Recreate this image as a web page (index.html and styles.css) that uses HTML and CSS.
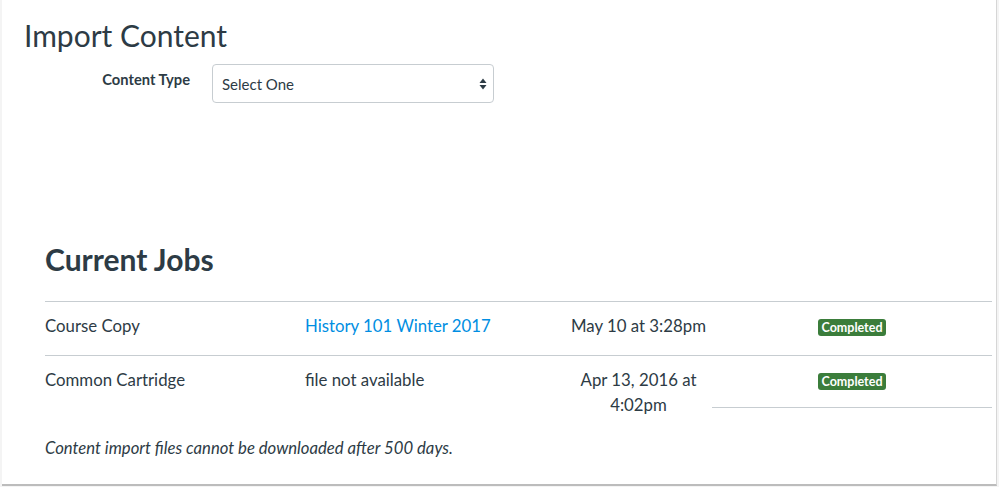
FILE: index.html
```html
<!DOCTYPE html>
<html lang="en">
<head>
    <meta charset="UTF-8" />
    <title>Import Content</title>
    <link rel="stylesheet" href="styles.css">
</head>
<body>
    <div class="frame">
        <h1 class="page-title">Import Content</h1>

        <div class="form-row">
            <label class="form-label" for="content-type">Content Type</label>
            <div class="select-box" id="content-type">
                <span>Select One</span>
                <svg class="select-arrows" width="8" height="12" viewBox="0 0 8 12">
                    <path d="M4 0.5 L7.5 5 L0.5 5 Z" fill="#2d3b45"/>
                    <path d="M4 11.5 L7.5 7 L0.5 7 Z" fill="#2d3b45"/>
                </svg>
            </div>
        </div>

        <div class="jobs">
            <h2 class="jobs-title">Current Jobs</h2>

            <table class="jobs-table">
                <colgroup>
                    <col class="col-type">
                    <col class="col-source">
                    <col class="col-date">
                    <col class="col-status">
                </colgroup>
                <tr>
                    <td>Course Copy</td>
                    <td><a href="#">History 101 Winter 2017</a></td>
                    <td class="date">May 10 at 3:28pm</td>
                    <td class="status"><span class="badge">Completed</span></td>
                </tr>
                <tr>
                    <td>Common Cartridge</td>
                    <td>file not available</td>
                    <td class="date">Apr 13, 2016 at 4:02pm</td>
                    <td class="status last"><div class="status-wrap"><span class="badge">Completed</span></div></td>
                </tr>
            </table>

            <p class="note">Content import files cannot be downloaded after 500 days.</p>
        </div>
    </div>
</body>
</html>
```

FILE: styles.css
```css
* {
    margin: 0;
    padding: 0;
    box-sizing: border-box;
}

body {
    font-family: Lato, 'Open Sans', sans-serif;
    color: #2d3b45;
    background-color: #f4f4f4;
}

.frame {
    width: 995px;
    height: 486px;
    margin-left: 2px;
    background-color: #fff;
    border-right: 1px solid #d6d6d6;
    border-bottom: 2px solid #bcbcbc;
    padding: 17px 4px 0 0;
}

.page-title {
    font-size: 30px;
    font-weight: 400;
    line-height: 36px;
    margin-left: 22px;
}

.form-row {
    display: flex;
    align-items: flex-start;
    margin-top: 11px;
}

.form-label {
    width: 188px;
    text-align: right;
    font-size: 14.7px;
    font-weight: 700;
    padding-top: 6px;
}

.select-box {
    margin-left: 22px;
    width: 282px;
    height: 39px;
    border: 1px solid #c7cdd1;
    border-radius: 4px;
    display: flex;
    align-items: center;
    justify-content: space-between;
    padding: 0 6px 0 9px;
    font-size: 15px;
}

.select-arrows {
    display: block;
}

.jobs {
    margin-left: 43px;
    margin-top: 138px;
}

.jobs-title {
    font-size: 30px;
    font-weight: 700;
    line-height: 36px;
}

.jobs-table {
    margin-top: 24px;
    width: 947px;
    border-collapse: collapse;
    table-layout: fixed;
    font-size: 16.8px;
}

.col-type { width: 260px; }
.col-source { width: 260px; }
.col-date { width: 147px; }
.col-status { width: 280px; }

.jobs-table tr {
    border-top: 1px solid #c7cdd1;
}

.jobs-table td {
    vertical-align: top;
    padding: 11px 0 17px;
    line-height: 25px;
}

.jobs-table a {
    color: #008ee2;
    text-decoration: none;
}

.date {
    text-align: center;
}

.status {
    text-align: center;
}

.status.last {
    padding-bottom: 0;
}

.status-wrap {
    height: 41px;
    border-bottom: 1px solid #c7cdd1;
}

.badge {
    display: inline-block;
    background-color: #3b7d3b;
    color: #fff;
    font-size: 12.5px;
    font-weight: 700;
    line-height: 17px;
    padding: 0 4px;
    border-radius: 3px;
    vertical-align: middle;
}

.note {
    font-style: italic;
    font-size: 16.7px;
    line-height: 24px;
    margin-top: 2px;
}
```
